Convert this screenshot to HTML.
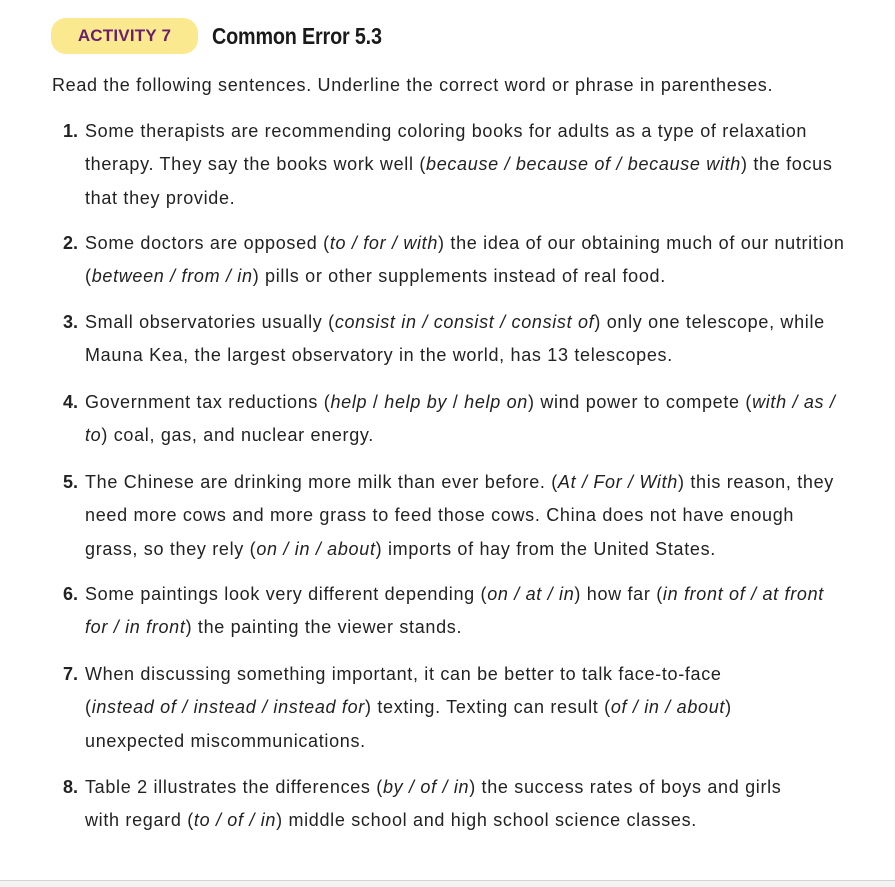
<!DOCTYPE html>
<html><head><meta charset="utf-8"><style>
html,body{margin:0;padding:0;background:#fff;}
body{width:895px;height:886px;position:relative;overflow:hidden;font-family:"Liberation Sans",Arial,sans-serif;color:#222;}
.badge{position:absolute;left:51px;top:18px;width:147px;height:36px;background:#fbe98f;border-radius:15px;color:#6b1f6b;font-weight:bold;font-size:17px;line-height:36px;text-align:center;letter-spacing:0.2px;}
.title{position:absolute;left:212px;top:20px;font-size:23px;font-weight:bold;line-height:32px;color:#1a1a1a;transform:scaleX(0.86);transform-origin:left;letter-spacing:-0.2px;}
.intro{position:absolute;left:52px;top:71px;font-size:18px;line-height:28px;white-space:nowrap;letter-spacing:0.68px;}
.item{position:absolute;left:0;white-space:nowrap;font-size:18px;line-height:33.4px;letter-spacing:0.68px;}
.num{position:absolute;left:40px;width:38px;text-align:right;font-weight:bold;letter-spacing:0;}
.txt{position:absolute;left:85px;}
.foot{position:absolute;left:0;top:880px;width:895px;height:6px;background:#f3f3f3;border-top:1px solid #d4d4d4;}
</style></head><body>
<div class="badge">ACTIVITY 7</div>
<div class="title">Common Error 5.3</div>
<div class="intro">Read the following sentences. Underline the correct word or phrase in parentheses.</div>

<div class="item" style="top:115px"><span class="num">1.</span><div class="txt">Some therapists are recommending coloring books for adults as a type of relaxation<br>therapy. They say the books work well (<i>because / because of / because with</i>) the focus<br>that they provide.</div></div>

<div class="item" style="top:227px"><span class="num">2.</span><div class="txt">Some doctors are opposed (<i>to / for / with</i>) the idea of our obtaining much of our nutrition<br>(<i>between / from / in</i>) pills or other supplements instead of real food.</div></div>

<div class="item" style="top:306px"><span class="num">3.</span><div class="txt">Small observatories usually (<i>consist in / consist / consist of</i>) only one telescope, while<br>Mauna Kea, the largest observatory in the world, has 13 telescopes.</div></div>

<div class="item" style="top:386px"><span class="num">4.</span><div class="txt">Government tax reductions (<i>help</i> / <i>help by</i> / <i>help on</i>) wind power to compete (<i>with / as /<br>to</i>) coal, gas, and nuclear energy.</div></div>

<div class="item" style="top:466px"><span class="num">5.</span><div class="txt">The Chinese are drinking more milk than ever before. (<i>At / For / With</i>) this reason, they<br>need more cows and more grass to feed those cows. China does not have enough<br>grass, so they rely (<i>on / in / about</i>) imports of hay from the United States.</div></div>

<div class="item" style="top:578px"><span class="num">6.</span><div class="txt">Some paintings look very different depending (<i>on / at / in</i>) how far (<i>in front of / at front<br>for / in front</i>) the painting the viewer stands.</div></div>

<div class="item" style="top:658px"><span class="num">7.</span><div class="txt">When discussing something important, it can be better to talk face-to-face<br>(<i>instead of / instead / instead for</i>) texting. Texting can result (<i>of / in / about</i>)<br>unexpected miscommunications.</div></div>

<div class="item" style="top:771px"><span class="num">8.</span><div class="txt">Table 2 illustrates the differences (<i>by / of / in</i>) the success rates of boys and girls<br>with regard (<i>to / of / in</i>) middle school and high school science classes.</div></div>

<div class="foot"></div>
</body></html>
